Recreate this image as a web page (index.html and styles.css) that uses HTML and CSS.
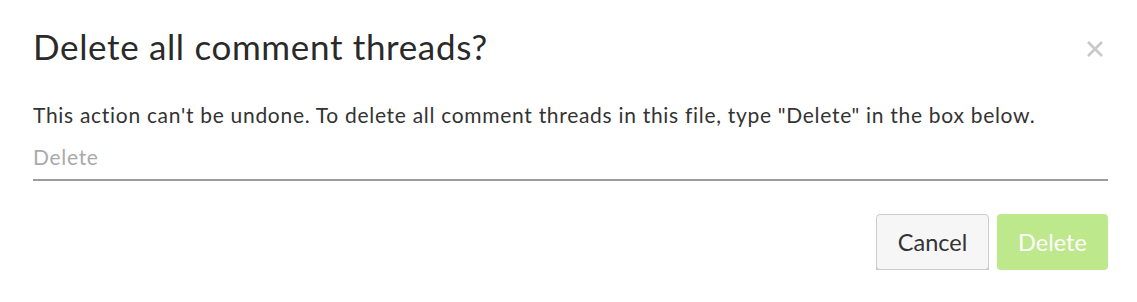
FILE: index.html
```html
<!DOCTYPE html>
<html>
<head>
<meta charset="utf-8">
<link rel="stylesheet" href="styles.css">
</head>
<body>
<div class="dialog">
  <div class="header">
    <h1 class="title">Delete all comment threads?</h1>
    <button class="close" aria-label="Close">
      <svg width="18" height="18" viewBox="0 0 18 18"><path d="M2 2 L16 16 M16 2 L2 16" stroke="#c8c8c8" stroke-width="2.6" fill="none"/></svg>
    </button>
  </div>
  <p class="message">This action can't be undone. To delete all comment threads in this file, type "Delete" in the box below.</p>
  <input class="confirm-input" type="text" placeholder="Delete">
  <div class="actions">
    <button class="btn btn-cancel">Cancel</button>
    <button class="btn btn-delete" disabled>Delete</button>
  </div>
</div>
</body>
</html>
```
FILE: styles.css
```css
html, body {
  margin: 0;
  padding: 0;
  background: #ffffff;
}
body {
  font-family: Lato, "Noto Sans", sans-serif;
  color: #333333;
}
.dialog {
  padding: 23px 29px 0 33px;
}
.header {
  display: flex;
  align-items: center;
  justify-content: space-between;
  height: 46px;
}
.title {
  margin: 0;
  font-size: 35px;
  font-weight: 400;
  letter-spacing: 0.65px;
  color: #2a2a2a;
  line-height: 46px;
}
.close {
  border: none;
  background: none;
  padding: 0;
  width: 18px;
  height: 18px;
  margin-top: 6px;
  margin-right: 4px;
  cursor: pointer;
}
.close svg {
  display: block;
}
.message {
  margin: 33px 0 0 0;
  font-size: 21px;
  line-height: 26px;
  letter-spacing: 0.7px;
  color: #333333;
}
.confirm-input {
  display: block;
  box-sizing: border-box;
  width: 100%;
  margin: 16px 0 0 0;
  padding: 0 0 11px 0;
  height: 37px;
  line-height: 24px;
  border: none;
  border-bottom: 2px solid #9c9c9c;
  font-family: inherit;
  font-size: 21px;
  letter-spacing: 0.7px;
  color: #333;
  outline: none;
  background: transparent;
}
.confirm-input::placeholder {
  color: #aaaaaa;
}
.actions {
  display: flex;
  justify-content: flex-end;
  gap: 8px;
  margin-top: 33px;
}
.btn {
  font-family: inherit;
  font-size: 23.5px;
  border-radius: 4px;
  height: 56px;
  padding: 0;
}
.btn-cancel {
  width: 113px;
  background: #f6f6f6;
  border: 1px solid #cccccc;
  color: #333333;
  box-shadow: 0 2px 0 #c4c4c4;
}
.btn-delete {
  width: 111px;
  background: #bde88c;
  border: none;
  color: #ffffff;
}
```
